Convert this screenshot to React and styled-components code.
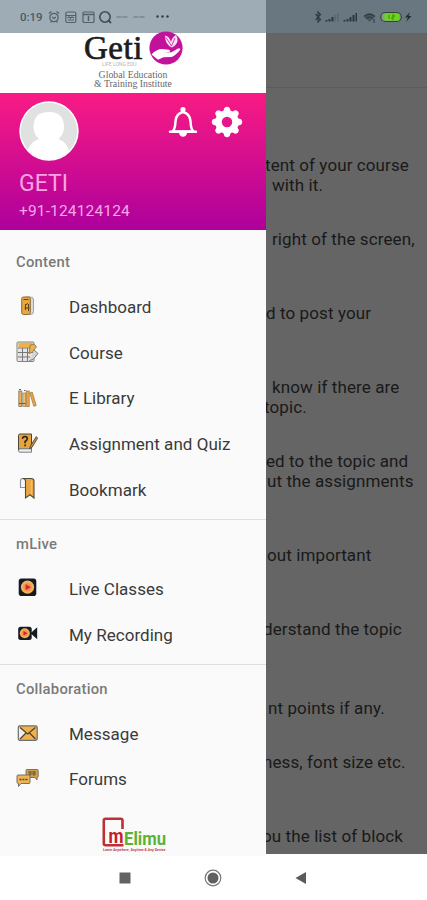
import React from "react";
import styled, { createGlobalStyle } from "styled-components";

const sections = [
  {
    title: "Content",
    items: [
      { icon: "dashboard", label: "Dashboard" },
      { icon: "course", label: "Course" },
      { icon: "library", label: "E Library" },
      { icon: "quiz", label: "Assignment and Quiz" },
      { icon: "bookmark", label: "Bookmark" },
    ],
  },
  {
    title: "mLive",
    items: [
      { icon: "live", label: "Live Classes" },
      { icon: "recording", label: "My Recording" },
    ],
  },
  {
    title: "Collaboration",
    items: [
      { icon: "message", label: "Message" },
      { icon: "forums", label: "Forums" },
    ],
  },
];

// start: where the visible part of each line begins next to the drawer
const paragraphs = [
  { gap: 67, lines: [{ start: -1, text: "tent of your course" }, { start: 6, text: "with it." }] },
  { gap: 34, lines: [{ start: 6, text: "right of the screen," }] },
  { gap: 54, lines: [{ start: 0, text: "d to post your" }] },
  { gap: 54, lines: [{ start: 6, text: "know if there are" }, { start: -2, text: "topic." }] },
  { gap: 34, lines: [{ start: 0, text: "ed to the topic and" }, { start: 1, text: "ut the assignments" }] },
  { gap: 54, lines: [{ start: 1, text: "out important" }] },
  { gap: 54, lines: [{ start: -3, text: "derstand the topic" }] },
  { gap: 59, lines: [{ start: 2, text: "nt points if any." }] },
  { gap: 34, lines: [{ start: -3, text: "ness, font size etc." }] },
  { gap: 54, lines: [{ start: -4, text: "ou the list of block" }] },
];

const icons = {
  dashboard: (
    <>
      <rect x="8" y="2" width="9.5" height="17.5" rx="3" fill="#dcdcdc" stroke="#a0a0a0" />
      <rect x="5.7" y="2" width="8.6" height="17.5" rx="1.8" fill="#e9a83f" stroke="#8a6a35" />
      <path d="M7.5 4.5h5M9 10l3-1.5M9.5 9v6M12.5 9v7M8.5 13h5" stroke="#5d4420" fill="none" />
    </>
  ),
  course: (
    <>
      <rect x="1" y="2" width="17" height="19.5" rx="1" fill="#e4e4e4" stroke="#838383" />
      <rect x="2.5" y="2.8" width="14" height="4.4" fill="#f0b044" />
      <path d="M2 8h15M2 12.5h15M2 17h12M6.5 8v13M11.5 8v13" stroke="#777" fill="none" />
      <path d="M14 5.5q4.5-3 6.5 1.5l-5.5 6-2 .5.5-2.5z" fill="#eeb04a" stroke="#7d7057" strokeWidth=".8" />
      <path d="M18 10l4 3.5-5 6-3.5 1" fill="#d5d5d5" stroke="#777" />
    </>
  ),
  library: (
    <>
      <rect x="2.8" y="5" width="3" height="15.5" fill="#eeb04a" stroke="#746b5e" strokeWidth=".7" />
      <rect x="6.8" y="7" width="3" height="13.5" fill="#e6c184" stroke="#857b6e" strokeWidth=".7" />
      <rect x="10.2" y="5" width="3" height="15.5" fill="#f0a536" stroke="#91744a" strokeWidth=".7" />
      <path d="M13.8 7l2.4-1 4 13.5-2.4.8z" fill="#f0a536" stroke="#91744a" strokeWidth=".7" />
      <path d="M3 3.5h2M8 4.5h1.5M3 17.5h6.5" stroke="#62605d" fill="none" />
    </>
  ),
  quiz: (
    <>
      <path d="M2.5 3.5q0-1.5 1.5-1.5h11.5v15H4q-1.5 0-1.5 1.5z" fill="#e7a33c" stroke="#4e453a" />
      <path d="M2.5 18.5q0-1.7 2-1.7h11v3.4H4q-1.5 0-1.5-1.7z" fill="#eee" stroke="#718087" />
      <path d="M6.5 6.8q.2-2.3 2.5-2.3t2.3 2.3q0 1.3-2.2 2.7v1.7M9.1 12.5v1.8" fill="none" stroke="#25201b" strokeWidth="1.6" />
      <path d="M20.3 4.5l-6 9.5-.7 2.7 2.5-1.5 5.5-9z" fill="#c88d37" stroke="#463f37" strokeWidth=".8" />
    </>
  ),
  bookmark: (
    <>
      <path d="M9 1.5H6.5Q4.5 1.5 4.5 4v6.5H9" fill="#f7f7f7" stroke="#8c979f" strokeWidth="1.2" />
      <path d="M6.5 1.5H15q3 0 3 2.5v17l-4-3.2L9.5 21V4q0-2.5-3-2.5z" fill="#eaa740" stroke="#554a3a" strokeWidth="1.1" />
      <path d="M15.5 3.5v14" stroke="#f5bf63" strokeWidth="1.5" />
    </>
  ),
  live: (
    <>
      <rect x="2.7" y="2.5" width="17.6" height="17.6" rx="2.8" fill="#151b21" />
      <circle cx="11.5" cy="11.2" r="6.6" fill="#efb35d" />
      <circle cx="11.5" cy="11.2" r="4.2" fill="#f58b55" />
      <path d="M9.7 8.3l5 2.9-5 2.9z" fill="#d7251d" />
    </>
  ),
  recording: (
    <>
      <rect x="2.2" y="4.7" width="13.5" height="13.2" rx="2.5" fill="#151b21" />
      <path d="M14.5 11.3l6.7-6v12z" fill="#151b21" />
      <circle cx="8.8" cy="11.3" r="5" fill="#efad58" />
      <circle cx="8.8" cy="11.3" r="3" fill="#f58b55" />
      <path d="M7.5 9l4 2.3-4 2.3z" fill="#d7251d" />
    </>
  ),
  message: (
    <>
      <rect x="2.3" y="4.9" width="18.9" height="14.4" rx="1.5" fill="#f0b24b" stroke="#6d6e70" strokeWidth="1.2" />
      <path d="M3 6l6.5 6L3 18.5z" fill="#eee" />
      <path d="M4 6.5l7.7 6.5 7.7-6.5M4 18l6-6M19.5 18l-6-6" fill="none" stroke="#4a4238" strokeWidth="1.2" />
    </>
  ),
  forums: (
    <>
      <path d="M10 3.5q0-1 1-1h10q1.2 0 1.2 1v6q0 1-1.2 1v2.5l-2-2.5h-9z" fill="#d3a04c" stroke="#77746c" />
      <path d="M12 5h8M12.5 7h7.5M14 4v5M18 4v5" stroke="#5d523d" fill="none" strokeWidth=".9" />
      <path d="M1 9q0-1 1-1h11q1 0 1 1v6.5q0 1-1 1H5l-2.5 3v-3q-1.5 0-1.5-1z" fill="#edb553" stroke="#77706a" />
      <path d="M3.5 12.5h2M6.5 12.5h2M9.5 12.5h2" stroke="#55452c" fill="none" strokeWidth="1.3" />
    </>
  ),
};

const App = () => {
  return (
    <Screen>
      <GlobalStyle />
      <Main>
        <Drawer>
          <StatusBar>
            <Clock>0:19</Clock>
            <StatusLeftIcons />
          </StatusBar>
          <Brand>
            <BrandRow>
              <Wordmark>
                <BrandName>Geti</BrandName>
                <BrandMotto>LIFE LONG EDU</BrandMotto>
              </Wordmark>
              <HandLogo />
            </BrandRow>
            <Tagline>
              Global Education
              <br />
              &amp; Training Institute
            </Tagline>
          </Brand>
          <Profile>
            <ProfileTop>
              <Avatar />
              <Actions>
                <BellIcon />
                <GearIcon />
              </Actions>
            </ProfileTop>
            <UserName>GETI</UserName>
            <Phone>+91-124124124</Phone>
          </Profile>
          <Menu>
            {sections.map((section) => (
              <Section key={section.title}>
                <SectionTitle>{section.title}</SectionTitle>
                {section.items.map((item) => (
                  <MenuItem key={item.label}>
                    <svg width="24" height="24" viewBox="0 0 24 24">
                      {icons[item.icon]}
                    </svg>
                    <Label>{item.label}</Label>
                  </MenuItem>
                ))}
              </Section>
            ))}
          </Menu>
          <Footer>
            <ElimuLogo />
          </Footer>
        </Drawer>
        <Page>
          <StatusBar $dim>
            <StatusRightIcons />
          </StatusBar>
          <PageHeader />
          {paragraphs.map((p) => (
            <Paragraph key={p.lines[0].text} $gap={p.gap}>
              {p.lines.map((line) => (
                <Line key={line.text} $start={line.start}>
                  {line.text}
                </Line>
              ))}
            </Paragraph>
          ))}
        </Page>
      </Main>
      <NavBar>
        <svg width="12" height="12">
          <rect x=".5" y=".5" width="11" height="11" fill="#636363" />
        </svg>
        <svg width="18" height="18">
          <circle cx="9" cy="9" r="7.8" fill="none" stroke="#777" strokeWidth="1.2" />
          <circle cx="9" cy="9" r="5.5" fill="#606060" />
        </svg>
        <svg width="12" height="14">
          <path d="M.5 7L11 1v12z" fill="#5b5b5b" />
        </svg>
      </NavBar>
    </Screen>
  );
};

const StatusLeftIcons = () => (
  <svg width="128" height="16" viewBox="0 0 128 16" fill="none" stroke="#53616b" strokeWidth="1.2">
    <circle cx="6" cy="8.5" r="4.2" />
    <path d="M.8 4.5L3.5 2.5M11.2 4.5L8.5 2.5M4 8l2 1.5L8 8M2.5 13.5l1-1M9.5 13.5l-1-1" />
    <rect x="17.8" y="3" width="10" height="10.5" rx="1.5" />
    <path d="M18 6.5h10M19.5 9l1.5-1 1.5 1 1.5-1 2 1M20 11h6" />
    <rect x="35" y="3" width="11" height="10.5" rx="1" />
    <path d="M35 5.5h11M40.5 7v5" strokeWidth="1.5" />
    <circle cx="57" cy="8" r="5.2" stroke="#414e57" strokeWidth="1.6" />
    <path d="M60 11l3 3" stroke="#414e57" strokeWidth="1.8" />
    <path d="M68.5 8h11M85.5 8h11" strokeDasharray="5 1" opacity=".75" />
    <g fill="#303c45" stroke="none">
      <circle cx="109.5" cy="7.5" r="1.2" />
      <circle cx="114.5" cy="7.5" r="1.2" />
      <circle cx="119.5" cy="7.5" r="1.2" />
    </g>
  </svg>
);

const StatusRightIcons = () => (
  <svg width="101" height="16" viewBox="0 0 101 16" fill="none">
    <path d="M2.5 5.2l5 5.3L5 13V3l2.5 2.5-5 5.3" stroke="#303a41" strokeWidth="1.2" />
    <g fill="#2c363e">
      <path d="M12.5 11h2v1.5h-2zM15.5 10h2v2.5h-2zM18.5 8h2v4.5h-2z" />
      <path d="M21.5 6h1.5v6.5h-1.5zM24 4h1.5v8.5H24z" opacity=".25" />
      <path d="M30.5 11h2v1.5h-2zM33.5 10h2v2.5h-2zM36.5 8h2v4.5h-2zM39.5 6h2v6.5h-2zM42.5 4h1.5v8.5h-1.5z" />
    </g>
    <path d="M51 7.5q5.500-5 11 0L56.500 13z" fill="#4b5860" />
    <path d="M51 7.5q5.5-5 11 0M53 9.500q3.500-3 7 0" stroke="#2d383f" strokeWidth="1.2" />
    <path d="M61 10v4" stroke="#2d383f" />
    <rect x="67.8" y="3.5" width="20.5" height="9" rx="4.5" fill="#82a47c" stroke="#34443c" strokeWidth="1.2" />
    <rect x="71.5" y="4.5" width="14.5" height="7" rx="1.5" fill="#6cd51a" />
    <path d="M76 6v4M79 6h2v2h-2v2h2" stroke="#3a8a16" />
    <path d="M97 3l-5 5.5h3l-2 4.5 5.500-6h-3z" fill="#222d34" />
  </svg>
);

const HandLogo = () => (
  <svg width="34" height="34" viewBox="0 0 34 34">
    <circle cx="17" cy="17" r="16.6" fill="#c3129a" />
    <path d="M16 4.500q4.500.5 6 7 .5-5 5-7.500 3.500 6-1 10.500l-3 2q-7-3-7-12z" fill="#fbe3f5" />
    <path d="M17 6.500l5.500 8.500 3.500-8" fill="none" stroke="#c3129a" strokeWidth=".8" />
    <path d="M2.500 23.500q5-5.500 10.500-5.500l7 .8q2 .8.8 2l-4.800.7 6.500-.2 6.500-3.800q3-.5 2.200 1.200-4.200 5.500-8.700 7.300l-8 .2-5.500 2.500z" fill="#fff" />
  </svg>
);

const BellIcon = () => (
  <svg width="30" height="32" viewBox="0 0 30 32">
    <path
      d="M4.5 25.5Q7 23 7.3 17.5l.3-3Q8.5 7.500 15 6q6.500 1.500 7.400 8.500l.3 3q.3 5.500 2.800 8z"
      fill="none"
      stroke="#fff"
      strokeWidth="2.5"
      strokeLinejoin="round"
    />
    <path d="M2 25.8h26" stroke="#fff" strokeWidth="2.4" strokeLinecap="round" />
    <circle cx="15" cy="3.6" r="2.6" fill="#fff" />
    <path d="M11 27h8q-.8 3.800-4 3.800T11 27z" fill="#fff" />
  </svg>
);

const GearIcon = () => (
  <svg width="32" height="32" viewBox="-16 -16 32 32">
    {[0, 45, 90, 135, 180, 225, 270, 315].map((angle) => (
      <path
        key={angle}
        d="M-4.2-9L-2.7-14Q0-16.5 2.7-14L4.2-9z"
        transform={`rotate(${angle})`}
        fill="#fff"
      />
    ))}
    <circle r="8.5" fill="none" stroke="#fff" strokeWidth="6.5" />
  </svg>
);

const Avatar = () => (
  <svg width="60" height="60" viewBox="0 0 60 60">
    <clipPath id="face">
      <circle cx="30" cy="30" r="28.2" />
    </clipPath>
    <circle cx="30" cy="30" r="29.7" fill="#fff" />
    <g clipPath="url(#face)">
      <rect width="60" height="60" fill="#e0e2e1" />
      <path d="M30 11q15 0 15 15 0 7-5.500 12 9 3 11 14L30 62 8 52q2-11 12-14-5.500-5-5.500-12 0-15 15.500-15z" fill="#fff" />
    </g>
  </svg>
);

const ElimuLogo = () => (
  <svg width="65" height="36" viewBox="0 0 65 36">
    <path d="M20.5 12V3.500q0-1.700-1.700-1.700H3.500q-1.700 0-1.700 1.700v23q0 1.700 1.700 1.700h18" fill="none" stroke="#bd3036" strokeWidth="2.6" />
    <text x="6.5" y="25.8" fill="#c3202a" fontFamily="Roboto, sans-serif" fontWeight="700" fontSize="20" textLength="15" lengthAdjust="spacingAndGlyphs">
      m
    </text>
    <text x="22" y="28.3" fill="#5bb336" fontFamily="Roboto, sans-serif" fontWeight="700" fontSize="17.5" textLength="42" lengthAdjust="spacingAndGlyphs">
      Elimu
    </text>
    <text x="1" y="33.5" fill="#c3444b" fontFamily="Roboto, sans-serif" fontWeight="700" fontSize="3.6" textLength="62.5">
      Learn Anywhere, Anytime &amp; Any Device
    </text>
  </svg>
);

export default App;

const GlobalStyle = createGlobalStyle`
  body {
    margin: 0;
    background: #fff;
    font-family: Roboto, "Noto Sans", sans-serif;
  }
  * {
    box-sizing: border-box;
  }
  svg {
    display: block;
    flex-shrink: 0;
  }
`;

const Screen = styled.div`
  display: flex;
  flex-direction: column;
  width: 427px;
  height: 900px;
  overflow: hidden;
`;

const Main = styled.div`
  display: flex;
  align-items: flex-start;
  height: 856px;
`;

const Drawer = styled.div`
  display: flex;
  flex-direction: column;
  width: 266px;
  height: 856px;
  background: #fafafa;
`;

const Page = styled.div`
  flex: 1;
  height: 854px;
  overflow: hidden;
  background: #656565;
`;

const StatusBar = styled.div`
  display: flex;
  align-items: center;
  flex-shrink: 0;
  height: 33px;
  padding-left: ${(props) => (props.$dim ? "47px" : "20px")};
  background: ${(props) => (props.$dim ? "#697781" : "#9eacb6")};
`;

const Clock = styled.span`
  width: 28px;
  color: #4b5963;
  font-size: 11.5px;
  font-weight: 500;
`;

const Brand = styled.div`
  display: flex;
  flex-direction: column;
  align-items: center;
  height: 60px;
  background: #fff;
`;

const BrandRow = styled.div`
  display: flex;
  justify-content: space-between;
  width: 100px;
  height: 36px;
  margin-top: -2px;
`;

const Wordmark = styled.div`
  width: 60px;
`;

const BrandName = styled.div`
  height: 29px;
  padding-left: 1px;
  color: #1c1c1c;
  font-family: "Liberation Serif", serif;
  font-size: 33px;
  letter-spacing: 0.5px;
  line-height: 35px;
  -webkit-text-stroke: 0.7px #1c1c1c;
`;

const BrandMotto = styled.div`
  padding-left: 19px;
  color: #b5b5b5;
  font-size: 5px;
  line-height: 8px;
  white-space: nowrap;
`;

const Tagline = styled.div`
  margin-top: 4px;
  color: #686868;
  font-family: "Liberation Serif", serif;
  font-size: 9.8px;
  line-height: 8.5px;
  text-align: center;
`;

const Profile = styled.div`
  height: 137px;
  padding: 8px 23px 0 19px;
  background: linear-gradient(#f91b84, #ad009c);
`;

const ProfileTop = styled.div`
  display: flex;
  justify-content: space-between;
`;

const Actions = styled.div`
  display: flex;
  gap: 13px;
  padding-top: 5px;
`;

const UserName = styled.div`
  margin-top: 10px;
  color: #fba3e0;
  font-size: 23px;
  line-height: 26px;
`;

const Phone = styled.div`
  margin-top: 4px;
  color: #f7a6ea;
  font-size: 15.5px;
  letter-spacing: 0.15px;
  line-height: 20px;
`;

const Menu = styled.div`
  padding-top: 8px;
`;

const Section = styled.div`
  padding-bottom: 6.7px;

  & + & {
    border-top: 1px solid #dedede;
  }
`;

const SectionTitle = styled.div`
  padding: 2px 0 0 16px;
  color: #7a7a7a;
  font-size: 14.8px;
  font-weight: 500;
  letter-spacing: 0.25px;
  line-height: 44px;
`;

const MenuItem = styled.div`
  display: flex;
  align-items: center;
  gap: 29px;
  height: 45.6px;
  padding-left: 16px;
`;

const Label = styled.span`
  padding-top: 1px;
  color: #3a3a3a;
  font-size: 17px;
  letter-spacing: 0.03px;
`;

const Footer = styled.div`
  display: flex;
  justify-content: center;
  padding: 9px 0 0 3px;
`;

const PageHeader = styled.div`
  height: 55px;
  border-bottom: 1px solid #5b5b5b;
`;

const Paragraph = styled.div`
  margin-top: ${(props) => props.$gap}px;
`;

const Line = styled.div`
  margin-left: ${(props) => props.$start}px;
  color: #191919;
  font-size: 17px;
  letter-spacing: 0.1px;
  line-height: 20px;
  white-space: nowrap;
`;

const NavBar = styled.div`
  display: flex;
  align-items: center;
  gap: 73px;
  height: 44px;
  padding-left: 119px;
  background: #fff;
`;
